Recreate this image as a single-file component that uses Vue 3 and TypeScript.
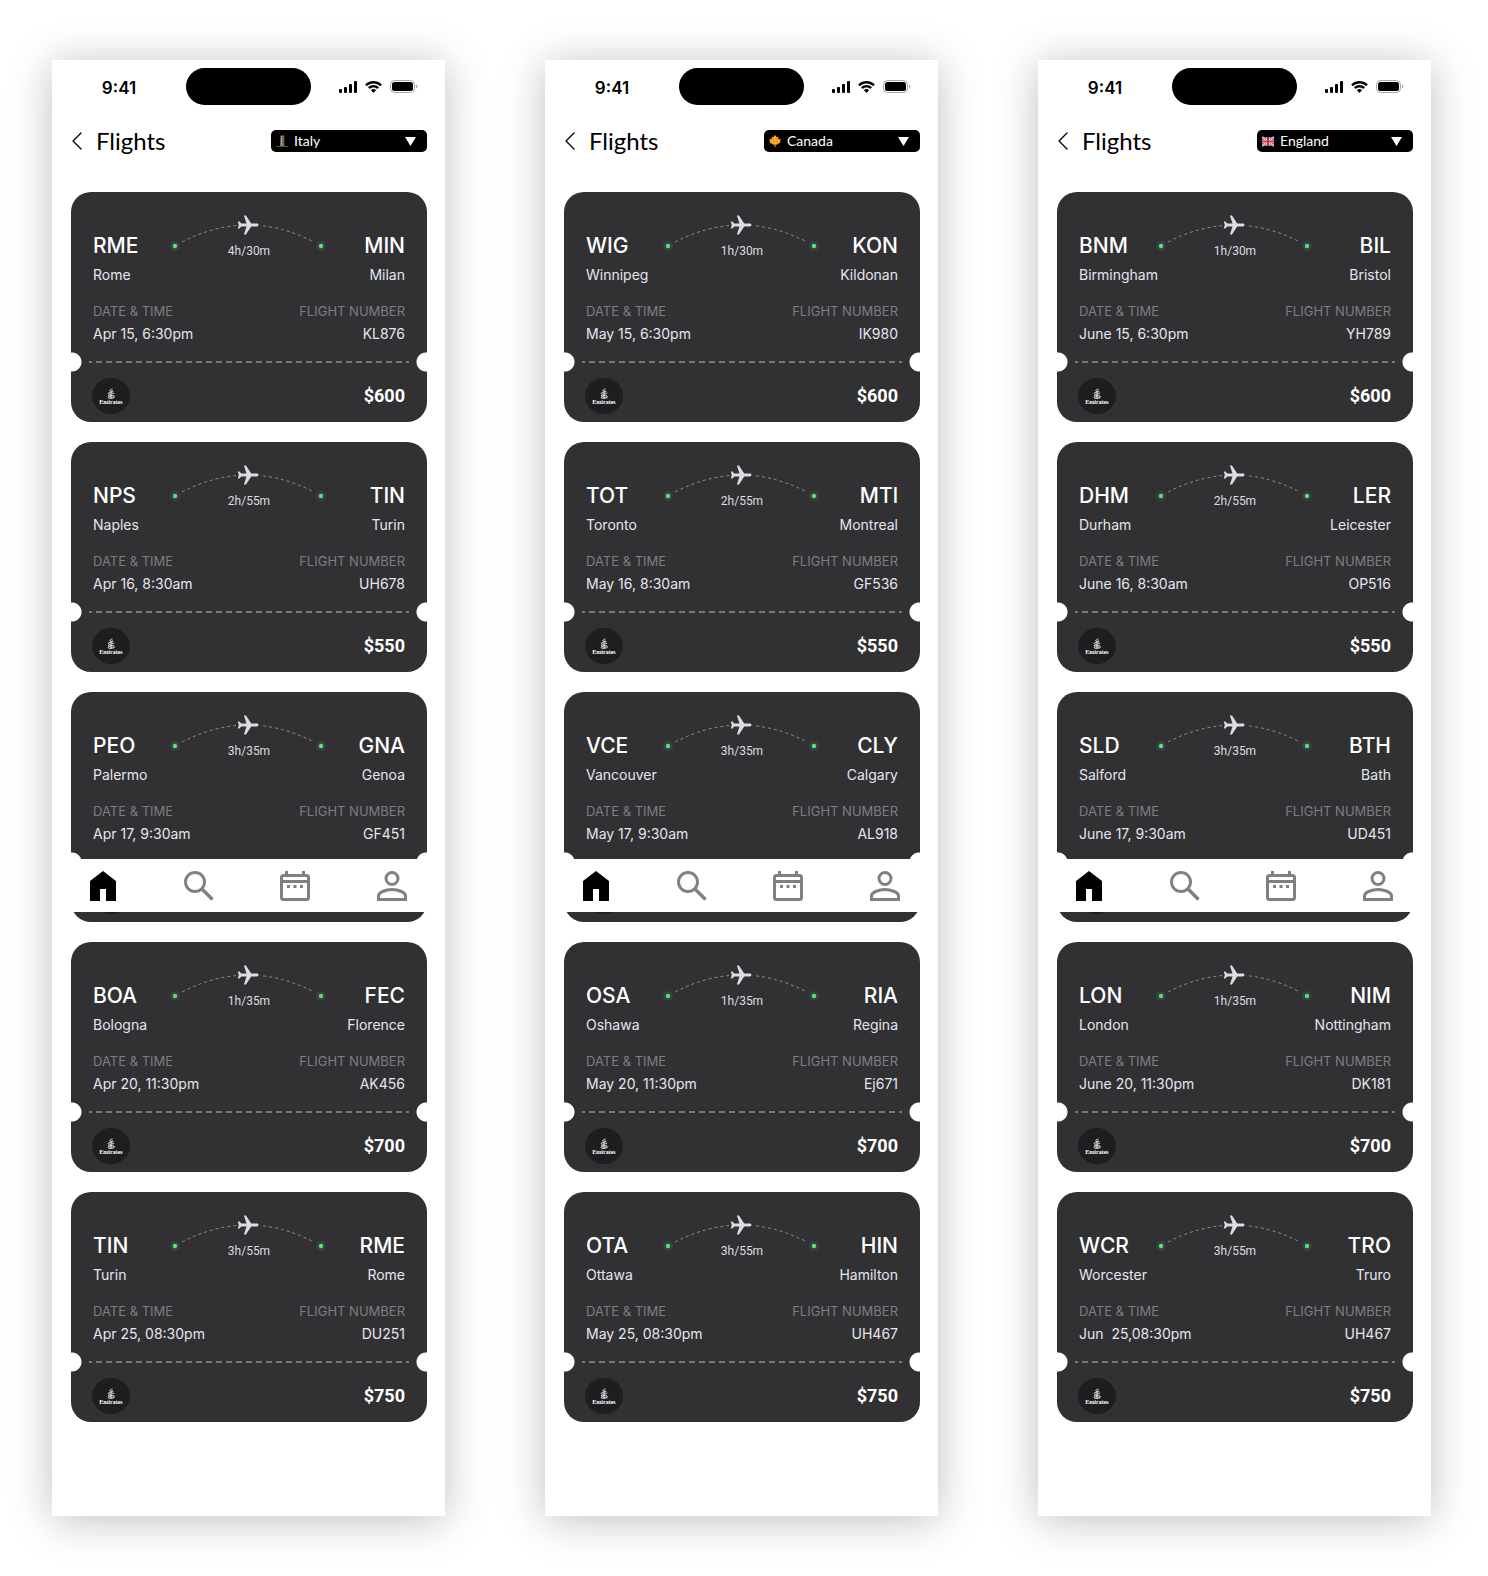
<script setup lang="ts">
import { ref } from 'vue'

type Country = 'Italy' | 'Canada' | 'England'

interface Flight {
  from: string
  fromCity: string
  to: string
  toCity: string
  duration: string
  date: string
  number: string
  price: string
}

interface Screen {
  id: string
  country: Country
  flights: Flight[]
}

const countries: Country[] = ['Italy', 'Canada', 'England']

function flight(
  from: string, fromCity: string, to: string, toCity: string,
  duration: string, date: string, number: string, price: string,
): Flight {
  return { from, fromCity, to, toCity, duration, date, number, price }
}

const screens = ref<Screen[]>([
  {
    id: 'italy',
    country: 'Italy',
    flights: [
      flight('RME', 'Rome', 'MIN', 'Milan', '4h/30m', 'Apr 15, 6:30pm', 'KL876', '$600'),
      flight('NPS', 'Naples', 'TIN', 'Turin', '2h/55m', 'Apr 16, 8:30am', 'UH678', '$550'),
      flight('PEO', 'Palermo', 'GNA', 'Genoa', '3h/35m', 'Apr 17, 9:30am', 'GF451', '$650'),
      flight('BOA', 'Bologna', 'FEC', 'Florence', '1h/35m', 'Apr 20, 11:30pm', 'AK456', '$700'),
      flight('TIN', 'Turin', 'RME', 'Rome', '3h/55m', 'Apr 25, 08:30pm', 'DU251', '$750'),
    ],
  },
  {
    id: 'canada',
    country: 'Canada',
    flights: [
      flight('WIG', 'Winnipeg', 'KON', 'Kildonan', '1h/30m', 'May 15, 6:30pm', 'IK980', '$600'),
      flight('TOT', 'Toronto', 'MTl', 'Montreal', '2h/55m', 'May 16, 8:30am', 'GF536', '$550'),
      flight('VCE', 'Vancouver', 'CLY', 'Calgary', '3h/35m', 'May 17, 9:30am', 'AL918', '$650'),
      flight('OSA', 'Oshawa', 'RIA', 'Regina', '1h/35m', 'May 20, 11:30pm', 'Ej671', '$700'),
      flight('OTA', 'Ottawa', 'HIN', 'Hamilton', '3h/55m', 'May 25, 08:30pm', 'UH467', '$750'),
    ],
  },
  {
    id: 'england',
    country: 'England',
    flights: [
      flight('BNM', 'Birmingham', 'BIL', 'Bristol', '1h/30m', 'June 15, 6:30pm', 'YH789', '$600'),
      flight('DHM', 'Durham', 'LER', 'Leicester', '2h/55m', 'June 16, 8:30am', 'OP516', '$550'),
      flight('SLD', 'Salford', 'BTH', 'Bath', '3h/35m', 'June 17, 9:30am', 'UD451', '$650'),
      flight('LON', 'London', 'NIM', 'Nottingham', '1h/35m', 'June 20, 11:30pm', 'DK181', '$700'),
      flight('WCR', 'Worcester', 'TRO', 'Truro', '3h/55m', 'Jun  25,08:30pm', 'UH467', '$750'),
    ],
  },
])
</script>

<template>
  <main class="board">
    <section v-for="screen in screens" :key="screen.id" class="phone">
      <div class="status">
        <span class="clock">9:41</span>
        <span class="island"></span>
        <span class="signals">
          <svg width="19" height="12" viewBox="0 0 19 12" aria-hidden="true">
            <rect x="1" y="8" width="3" height="4" rx="1" />
            <rect x="6" y="6" width="3" height="6" rx="1" />
            <rect x="11" y="3" width="3" height="9" rx="1" />
            <rect x="16" y="0" width="3" height="12" rx="1" />
          </svg>
          <svg width="17" height="12" viewBox="0 0 17 12" aria-hidden="true">
            <path d="M8.5 2.5c2.4 0 4.7.9 6.4 2.5.1.1.3.1.5 0l1.2-1.3c.1-.1.1-.3 0-.5C12.100-1 4.900-1 .4 3.200c-.1.2-.1.4 0 .5L1.600 5c.2.1.4.1.5 0C3.800 3.400 6.100 2.500 8.500 2.500z" />
            <path d="M8.500 6.500c1.300 0 2.600.5 3.500 1.300.2.1.4.1.5 0l1.300-1.300c.1-.1.1-.3 0-.5-3-2.800-7.600-2.800-10.600 0-.1.200-.1.400 0 .5l1.300 1.300c.1.100.3.100.5 0 .9-.8 2.200-1.300 3.500-1.300z" />
            <path d="M11 9.300c.1-.1.1-.3 0-.4-1.500-1.200-3.500-1.200-5 0-.1.100-.1.300 0 .4l2.300 2.400c.1.100.3.100.4 0z" />
          </svg>
          <svg width="28" height="13" viewBox="0 0 28 13" aria-hidden="true">
            <rect x=".5" y=".5" width="24" height="12" rx="4" fill="none" stroke="#a6a6a6" />
            <rect x="2" y="2" width="21" height="9" rx="2.5" />
            <path d="M26 4.500v4c.8-.3 1.300-1.100 1.300-2s-.5-1.700-1.300-2z" fill="#a6a6a6" />
          </svg>
        </span>
      </div>

      <header class="header">
        <button class="back" type="button" aria-label="Back">
          <svg width="12" height="18" viewBox="0 0 12 18" aria-hidden="true">
            <path d="M10 1 2 9l8 8" fill="none" stroke="#000" stroke-width="1.3" stroke-linecap="round" stroke-linejoin="round" />
          </svg>
        </button>
        <h1 class="title">Flights</h1>
        <div class="picker">
          <svg v-if="screen.country === 'Italy'" class="flag" width="12" height="14" viewBox="0 0 12 14" aria-hidden="true">
            <path d="M4 12 4.600 1.500h3.600L8.300 12z" fill="#8c7963" />
            <path d="M4.600 3.500h3.600M4.500 6h3.700M4.300 8.500h4" stroke="#54483b" />
            <path d="M5.500 2v9" stroke="#b3a28b" />
            <path d="M0 12.500h12" stroke="#4c6123" />
          </svg>
          <svg v-else-if="screen.country === 'Canada'" class="flag" width="12" height="14" viewBox="0 0 12 14" aria-hidden="true">
            <path d="m6 .8 1.400 2.300 2-.4-.2 2L12 5.500l-1 1.700.6 1.300-2.800 1.400L7 11l-.6-.3V13h-.9v-2.300L5 11 3.200 9.900.4 8.500 1 7.200 0 5.500l2.800-.8-.2-2 2 .4z" fill="#f79c1c" />
            <path d="M6 2v8M1.500 6.500 6 10l4.500-3.500" stroke="#fdc04a" stroke-width=".7" fill="none" />
            <path d="M6 10v3" stroke="#a85a10" />
          </svg>
          <svg v-else class="flag" width="12" height="14" viewBox="0 0 12 14" aria-hidden="true">
            <path d="M0 3h12v9H0z" fill="#3558a0" />
            <path d="m0 3 12 9M12 3 0 12" stroke="#fff" stroke-width="2" />
            <path d="m0 3 12 9M12 3 0 12" stroke="#e0344c" stroke-width=".8" />
            <path d="M6 3v9M0 7.500h12" stroke="#fff" stroke-width="3" />
            <path d="M6 3v9M0 7.500h12" stroke="#e0243c" stroke-width="2" />
          </svg>
          <select v-model="screen.country" aria-label="Country">
            <option v-for="name in countries" :key="name" :value="name">{{ name }}</option>
          </select>
          <svg class="caret" width="11" height="9" viewBox="0 0 11 9" aria-hidden="true">
            <path d="M0 0h11L5.500 9z" fill="#fff" />
          </svg>
        </div>
      </header>

      <div class="list">
        <article v-for="item in screen.flights" :key="item.from" class="ticket">
          <div class="route">
            <div class="stop">
              <h2>{{ item.from }}</h2>
              <p>{{ item.fromCity }}</p>
            </div>
            <div class="path">
              <svg width="158" height="42" viewBox="0 0 158 42" aria-hidden="true">
                <path d="M12 31Q78-3 144 31" fill="none" stroke="#909094" stroke-dasharray="3 3" />
                <path d="M66 4h24v18H66z" fill="#313133" />
                <circle cx="5" cy="35" r="5" fill="#3e3e41" />
                <circle cx="5" cy="35" r="2.2" fill="#47eb70" />
                <circle cx="151" cy="35" r="5" fill="#3e3e41" />
                <circle cx="151" cy="35" r="2.2" fill="#47eb70" />
                <path d="M88.500 14c0-.9-.8-1.400-1.700-1.400h-5.600L76 4.500h-2.100l2.600 8.100h-5.200l-1.900-2.100h-1.600l1 3.500-1 3.500h1.600l1.900-2.100h5.200l-2.600 8.100H76l5.200-8.100h5.600c.9 0 1.700-.5 1.700-1.400z" fill="#dcdce2" />
              </svg>
              <span>{{ item.duration }}</span>
            </div>
            <div class="stop end">
              <h2>{{ item.to }}</h2>
              <p>{{ item.toCity }}</p>
            </div>
          </div>
          <dl class="facts">
            <div>
              <dt>DATE &amp; TIME</dt>
              <dd>{{ item.date }}</dd>
            </div>
            <div class="end">
              <dt>FLIGHT NUMBER</dt>
              <dd>{{ item.number }}</dd>
            </div>
          </dl>
          <svg class="tear" height="2" aria-hidden="true">
            <line x1="0" y1="1" x2="100%" y2="1" stroke="#77777a" stroke-width="2" stroke-dasharray="6 4" stroke-dashoffset="3" />
          </svg>
          <footer class="fare">
            <svg width="38" height="36" viewBox="0 0 38 36" role="img" aria-label="Emirates">
              <ellipse cx="19" cy="18" rx="19" ry="18" fill="#1e1e20" />
              <path d="M20.500 11c-2 .3-3.800 1.800-2.200 2.200s2.800-1 2.700.2-4.300.4-4.800 1.900 3 1.200 6-.3M16 17.500c2 1.200 4-1 5.500 0s-1 2-2.500 1.500-3.500-.5-3 .6 3.500.6 5 .4 1.500-.8 1.800-1.500M19 13v8" fill="none" stroke="#dcdcdc" />
              <text x="19" y="26" text-anchor="middle" class="brand">Emirates</text>
            </svg>
            <strong>{{ item.price }}</strong>
          </footer>
        </article>
      </div>

      <nav class="tabs" aria-label="Main">
        <button type="button" aria-label="Home">
          <svg width="28" height="30" viewBox="0 0 28 30" aria-hidden="true">
            <path d="M1 30V10L14 0l13 10v20H17V18h-6v12z" fill="#000" />
          </svg>
        </button>
        <button type="button" aria-label="Search">
          <svg width="30" height="30" viewBox="0 0 30 30" aria-hidden="true">
            <circle cx="11" cy="11" r="9.5" fill="none" stroke="#808080" stroke-width="3" />
            <path d="m18 18 10.500 10.500" stroke="#808080" stroke-width="3.4" />
          </svg>
        </button>
        <button type="button" aria-label="Trips">
          <svg width="30" height="30" viewBox="0 0 30 30" aria-hidden="true">
            <rect x="1.5" y="4.5" width="27" height="24" rx="2" fill="none" stroke="#808080" stroke-width="3" />
            <path d="M2 10.500h26M6.500 0v4M23.500 0v4" stroke="#808080" stroke-width="3" />
            <path d="M7 15.500h3M13.500 15.500h3M20 15.500h3" stroke="#808080" stroke-width="3" />
          </svg>
        </button>
        <button type="button" aria-label="Profile">
          <svg width="30" height="30" viewBox="0 0 30 30" aria-hidden="true">
            <circle cx="15" cy="7.5" r="6" fill="none" stroke="#808080" stroke-width="3" />
            <path d="M1.500 28.500V25c0-4 8-6.500 13.500-6.500S28.500 21 28.500 25v3.500z" fill="none" stroke="#808080" stroke-width="3" />
          </svg>
        </button>
      </nav>
    </section>
  </main>
</template>

<style>
body {
  margin: 0;
  background: #fff;
}
</style>

<style scoped>
.board {
  display: grid;
  grid-template-columns: repeat(3, minmax(0, 1fr));
  gap: 100px;
  box-sizing: border-box;
  padding: 60px 57px 60px 52px;
  font-family: Inter, "Noto Sans", sans-serif;
}

.phone {
  position: relative;
  box-sizing: border-box;
  padding-bottom: 94px;
  background: #fff;
  box-shadow: 0 4px 40px rgba(0, 0, 0, 0.25);
}

h1,
h2,
p,
dl,
dt,
dd {
  margin: 0;
}

button {
  display: flex;
  padding: 0;
  border: 0;
  background: none;
}

.status {
  display: grid;
  grid-template-columns: 1fr 125px 1fr;
  align-items: center;
  padding: 8px 0;
}

.clock {
  padding-top: 2px;
  text-align: center;
  font-size: 17px;
  font-weight: 600;
  line-height: 22px;
}

.island {
  height: 37px;
  border-radius: 19px;
  background: #000;
}

.signals {
  display: flex;
  align-items: center;
  justify-content: center;
  gap: 8px;
}

.header {
  display: flex;
  align-items: center;
  gap: 13px;
  height: 56px;
  padding: 0 18px 0 19px;
}

.title {
  flex: 1;
  font-family: Lato, sans-serif;
  font-size: 24px;
  font-weight: 400;
  line-height: 30px;
}

.picker {
  position: relative;
  width: 156px;
  height: 22px;
}

.picker select {
  display: block;
  width: 100%;
  height: 100%;
  padding: 0 24px 0 23px;
  border: 0;
  border-radius: 5px;
  appearance: none;
  background: #000;
  color: #fff;
  font-family: Lato, sans-serif;
  font-size: 14px;
  line-height: 22px;
}

.flag,
.caret {
  position: absolute;
  pointer-events: none;
}

.flag {
  top: 4px;
  left: 5px;
}

.caret {
  top: 7px;
  right: 11px;
}

.list {
  display: grid;
  gap: 20px;
  padding: 23px 18px 0 19px;
}

.ticket {
  height: 230px;
  border-radius: 20px;
  color: #fff;
  background:
    radial-gradient(circle at 1px 170px, #fff 9px, transparent 10px),
    radial-gradient(circle at calc(100% - 1px) 170px, #fff 9px, transparent 10px),
    #313133;
}

.route {
  display: grid;
  grid-template-columns: minmax(0, 1fr) 158px minmax(0, 1fr);
  padding: 19px 22px 0;
}

.stop {
  padding-top: 20px;
  white-space: nowrap;
}

.stop h2 {
  font-size: 21px;
  font-weight: 500;
  line-height: 30px;
}

.stop p {
  padding-top: 4px;
  color: #e5e5f0;
  font-size: 14px;
  line-height: 20px;
}

.end {
  display: flex;
  flex-direction: column;
  align-items: flex-end;
  text-align: right;
}

.path {
  display: flex;
  flex-direction: column;
  align-items: center;
}

.path span {
  margin-top: -10px;
  color: #dcdce2;
  font-family: Roboto, sans-serif;
  font-size: 12px;
  line-height: 16px;
}

.facts {
  display: flex;
  justify-content: space-between;
  padding: 16px 22px 0;
  font-size: 14px;
  line-height: 20px;
}

.facts dt {
  color: #7d7d83;
  font-size: 13px;
}

.facts dd {
  padding-top: 3px;
  color: #e5e5f0;
  white-space: pre;
}

.tear {
  display: block;
  width: calc(100% - 36px);
  margin: 17px 18px 0;
}

.fare {
  display: flex;
  align-items: center;
  justify-content: space-between;
  padding: 15px 22px 0 21px;
}

.fare strong {
  font-family: Roboto, sans-serif;
  font-size: 18px;
  font-weight: 700;
  line-height: 24px;
}

.brand {
  fill: #fff;
  font-family: "Liberation Serif", serif;
  font-size: 6px;
  font-weight: 700;
}

.tabs {
  position: absolute;
  top: 799px;
  left: 0;
  display: flex;
  align-items: center;
  justify-content: space-between;
  box-sizing: border-box;
  width: 100%;
  height: 53px;
  padding: 0 38px 0 37px;
  background: #fff;
}
</style>
